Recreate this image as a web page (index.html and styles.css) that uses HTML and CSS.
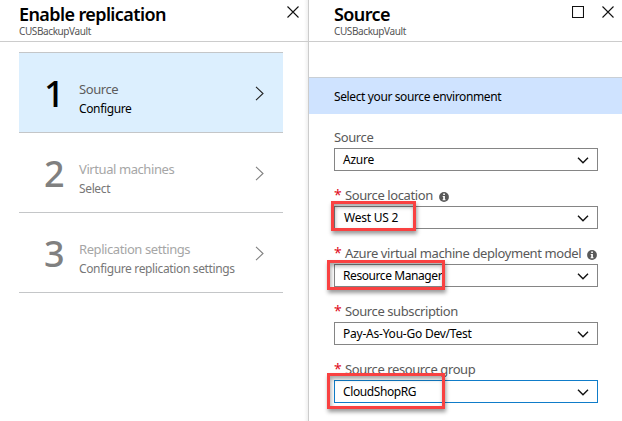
FILE: index.html
```html
<!DOCTYPE html>
<html lang="en">
<head>
<meta charset="utf-8">
<title>Enable replication</title>
<link rel="stylesheet" href="styles.css">
</head>
<body>
<svg class="defs" aria-hidden="true">
  <symbol id="close" viewBox="0 0 12 12"><path d="M.5.5l11 11M11.5.5l-11 11"/></symbol>
  <symbol id="square" viewBox="0 0 12 12"><path d="M.5.5h11v11H.5z"/></symbol>
  <symbol id="next" viewBox="0 0 9 15"><path d="M1 .8l7 6.7-7 6.7"/></symbol>
  <symbol id="down" viewBox="0 0 12 7"><path d="M1 .8l5 5 5-5"/></symbol>
  <symbol id="info" viewBox="0 0 10 10"><circle cx="5" cy="5" r="4.9"/><path d="M4.2 1.6h1.7v1.5H4.2zM3.7 4h2.2v3.3h.6v.9H3.6v-.9h.6V4.9h-.5z"/></symbol>
</svg>
<main class="portal">
  <section class="blade steps-blade">
    <header class="head">
      <div><h1>Enable replication</h1><p>CUSBackupVault</p></div>
      <div class="tools"><svg><use href="#close"/></svg></div>
    </header>
    <ol class="steps">
      <li class="step active"><span class="num">1</span><div class="info"><b>Source</b><span>Configure</span></div><svg class="next"><use href="#next"/></svg></li>
      <li class="step"><span class="num">2</span><div class="info"><b>Virtual machines</b><span>Select</span></div><svg class="next"><use href="#next"/></svg></li>
      <li class="step"><span class="num">3</span><div class="info"><b>Replication settings</b><span>Configure replication settings</span></div><svg class="next"><use href="#next"/></svg></li>
    </ol>
  </section>
  <section class="blade source-blade">
    <header class="head">
      <div><h1>Source</h1><p>CUSBackupVault</p></div>
      <div class="tools"><svg><use href="#square"/></svg><svg><use href="#close"/></svg></div>
    </header>
    <div class="band">Select your source environment</div>
    <form class="fields">
      <div class="field"><label>Source</label><div class="select"><span>Azure</span><svg><use href="#down"/></svg></div></div>
      <div class="field"><label><i>*</i>Source location<svg class="tip"><use href="#info"/></svg></label><div class="select"><span class="west">West US 2</span><svg><use href="#down"/></svg></div><div class="mark mark-location"></div></div>
      <div class="field"><label><i>*</i>Azure virtual machine deployment model<svg class="tip"><use href="#info"/></svg></label><div class="select"><span class="manager">Resource Manager</span><svg><use href="#down"/></svg></div><div class="mark mark-model"></div></div>
      <div class="field"><label><i>*</i>Source subscription</label><div class="select"><span>Pay-As-You-Go Dev/Test</span><svg><use href="#down"/></svg></div></div>
      <div class="field"><label><i>*</i>Source resource group</label><div class="select focus"><span class="group">CloudShopRG</span><svg><use href="#down"/></svg></div><div class="mark mark-group"></div></div>
    </form>
  </section>
</main>
</body>
</html>
```
FILE: styles.css
```css
* { box-sizing: border-box; }
body { margin: 0; background: #fff; color: #000; font-family: "Noto Sans", "Open Sans", sans-serif; overflow: hidden; }
h1, p, ol { margin: 0; padding: 0; }
.defs { position: absolute; width: 0; height: 0; }
svg { fill: none; stroke: #111; stroke-width: 1.1; display: block; flex: none; }
.portal { display: grid; grid-template-columns: 309px minmax(0, 1fr); height: 421px; }
.steps-blade { border-right: 1px solid #ccc; background: linear-gradient(to left, #f0f0f0, #fff 4px); }
.head { display: flex; justify-content: space-between; height: 42px; border-bottom: 1px solid #ccc; padding: 3px 9px 0 19px; }
.source-blade .head { padding: 3px 8px 0 25px; }
h1 { font-size: 18px; line-height: 22px; font-weight: 600; letter-spacing: -.6px; white-space: nowrap; }
.head p { font-size: 10px; line-height: 12px; color: #555; letter-spacing: -.4px; }
.tools { display: flex; gap: 18px; padding-top: 3px; }
.tools svg { width: 12px; height: 12px; }
.steps { list-style: none; margin: 10px 25px 0 19px; border-top: 1px solid #c4c6c8; }
.step { display: flex; align-items: center; height: 80px; border-bottom: 1px solid #c4c6c8; padding: 0 19px 0 25px; color: #808080; }
.num { width: 35px; font-size: 36px; line-height: 40px; font-weight: 500; letter-spacing: -1px; padding-top: 3px; }
.info { flex: 1; display: flex; flex-direction: column; padding-top: 13px; white-space: nowrap; }
.info b { font-size: 13px; line-height: 19px; font-weight: 400; color: #a6a6a6; letter-spacing: -.42px; }
.info span { font-size: 12px; line-height: 19px; color: #777; letter-spacing: -.36px; }
.next { width: 9px; height: 15px; stroke: #808080; margin-top: 1px; }
.active { background: #dceffe; }
.active .num, .active .info span { color: #000; }
.active .info b { color: #5c5c5c; }
.active .next { stroke: #222; }
.band { margin-top: 35px; height: 37px; border-top: 1px solid #c9cfd5; background: #cfe3ff; padding-left: 25px; font-size: 12px; line-height: 38px; letter-spacing: -.38px; }
.fields { padding: 14px 24px 0 25px; }
.field { position: relative; height: 58px; }
.field label { display: flex; align-items: center; height: 20px; color: #595959; font-size: 13px; line-height: 18px; padding-bottom: 2px; letter-spacing: -.4px; white-space: nowrap; }
.field i { font-style: normal; color: #e00b1c; width: 11px; font-size: 14px; }
.tip { width: 10px; height: 10px; margin: 4px 0 0 6px; }
#info circle { fill: #595959; stroke: none; }
#info path { fill: #fff; stroke: none; }
.select { display: flex; align-items: center; justify-content: space-between; height: 23px; border: 1px solid #858585; padding: 0 8px; font-size: 12px; letter-spacing: -.23px; line-height: 21px; }
.select svg { width: 12px; height: 7px; stroke-width: 1.4; margin-top: 1px; }
.west { padding-left: 1px; }
.manager { letter-spacing: -.42px; }
.group { letter-spacing: -.4px; }
.focus { border-color: #0f7cc9; }
.mark { position: absolute; border: 3px solid #f94141; box-shadow: 1px 3px 4px rgba(0,0,0,.4), inset 1px 3px 4px rgba(0,0,0,.35); }
.mark-location { left: -3px; top: 15px; width: 85px; height: 30px; }
.mark-model { left: -7px; top: 16px; width: 118px; height: 30px; }
.mark-group { left: -7px; top: 13px; width: 118px; height: 36px; }
```
